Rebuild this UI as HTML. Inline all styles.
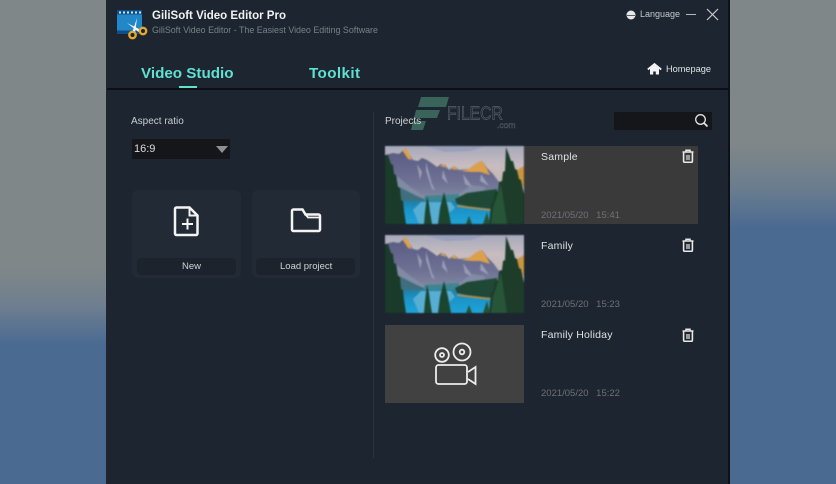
<!DOCTYPE html>
<html><head><meta charset="utf-8"><style>
*{box-sizing:border-box}
html,body{margin:0;padding:0}
body{width:836px;height:484px;position:relative;overflow:hidden;font-family:"Liberation Sans",sans-serif;background:#4a6a92}
.abs,.t{position:absolute}
.t{white-space:nowrap;line-height:1;filter:blur(.25px)}
svg{position:absolute;overflow:visible}
</style></head><body>
<div class="abs" style="left:0;top:0;width:107px;height:484px;background:linear-gradient(#7f8788 0,#7f8788 268px,#6f7f8f 305px,#4a6a92 345px)"></div>
<div class="abs" style="left:729px;top:0;width:107px;height:484px;background:linear-gradient(#7f8788 0,#7f8788 145px,#697c8e 190px,#4a6a92 228px)"></div>
<div class="abs" style="left:106px;top:0;width:624px;height:484px;background:#1c2530;border-left:1px solid #20262e;border-right:2px solid #0d1118"></div>
<div class="abs" style="left:107px;top:88px;width:622px;height:2px;background:#0c1016"></div>
<div class="abs" style="left:179px;top:86px;width:18px;height:2px;background:#62e0d0"></div>
<div class="abs" style="left:373px;top:112px;width:1px;height:346px;background:#29323d"></div>

<!-- logo -->
<svg style="left:117px;top:10px" width="34" height="30" viewBox="0 0 34 30">
<rect x="0" y="0" width="25" height="24" fill="#2287c8"/>
<path d="M0 0h25v4.500H0zM0 20.500h25V24H0z" fill="#0e4f86"/>
<path d="M2 1.500h2v2H2zM6 1.500h2v2H6zM10 1.500h2v2h-2zM14 1.500h2v2h-2zM18 1.500h2v2h-2zM22 1.500h2v2h-2z" fill="#cfe8f8"/>
<path d="M10 13l13 6.500-1.500 2.500zM20 8l-2 16-3-1z" fill="#f6f6f6"/>
<circle cx="15.500" cy="25" r="3.200" fill="#1c2530" stroke="#e5a82e" stroke-width="2.400"/>
<circle cx="26" cy="21" r="3.200" fill="#1c2530" stroke="#e5a82e" stroke-width="2.400"/>
</svg>
<div class="t" style="left:152px;top:11px;font-size:11.500px;font-weight:bold;color:#f0f2f2">GiliSoft Video Editor Pro</div>
<div class="t" style="left:152px;top:26px;font-size:8.900px;color:#7a8086">GiliSoft Video Editor - The Easiest Video Editing Software</div>

<div class="t" style="left:141px;top:66px;font-size:15.200px;font-weight:bold;color:#5fe0d0">Video Studio</div>
<div class="t" style="left:309px;top:66px;font-size:15.200px;font-weight:bold;color:#5fe0d0;letter-spacing:.4px">Toolkit</div>

<!-- top right -->
<svg style="left:626px;top:10px" width="10" height="10" viewBox="0 0 10 10"><circle cx="5" cy="5" r="4.500" fill="#e8e8e8"/><path d="M1 5.500h8" stroke="#5a6068" stroke-width="1"/></svg>
<div class="t" style="left:640px;top:10px;font-size:9px;color:#c4c8cb">Language</div>
<div class="abs" style="left:686px;top:14px;width:10px;height:1px;background:#b5b9bb"></div>
<svg style="left:706px;top:8px" width="13" height="13" viewBox="0 0 13 13"><path d="M1 1l11 11M12 1L1 12" stroke="#c8cbcd" stroke-width="1.200"/></svg>

<svg style="left:647px;top:63px" width="15" height="12" viewBox="0 0 15 12"><path d="M.8 6.500L7.500 1l6.700 5.500" fill="none" stroke="#f2f2f2" stroke-width="1.800"/><path d="M3 5.500L7.500 2 12 5.500V11.500H8.800V8.500H6.200v3H3z" fill="#f2f2f2"/></svg>
<div class="t" style="left:666px;top:65px;font-size:9.200px;color:#dfe2e3">Homepage</div>

<!-- left column -->
<div class="t" style="left:131px;top:116px;font-size:10px;color:#c8cccf;transform:translateY(1px)">Aspect ratio</div>
<div class="abs" style="left:132px;top:139px;width:98px;height:20px;background:#14161a"></div>
<div class="t" style="left:134px;top:144px;font-size:11px;color:#d8dadb">16:9</div>
<svg style="left:215px;top:146px" width="14" height="7" viewBox="0 0 14 7"><path d="M1 0h12L7 7z" fill="#8d9092"/></svg>

<div class="abs" style="left:132px;top:190px;width:109px;height:88px;background:#222a35;border-radius:6px"></div>
<div class="abs" style="left:137px;top:258px;width:99px;height:17px;background:#1c232d;border-radius:4px"></div>
<div class="abs" style="left:252px;top:190px;width:108px;height:88px;background:#222a35;border-radius:6px"></div>
<div class="abs" style="left:256px;top:258px;width:99px;height:17px;background:#1c232d;border-radius:4px"></div>
<svg style="left:174px;top:206px" width="26" height="30" viewBox="0 0 26 30"><path d="M2.500 1.500h13l8 8v18a1.500 1.500 0 0 1-1.500 1.500H2.500a1.500 1.500 0 0 1-1.500-1.500V3a1.500 1.500 0 0 1 1.500-1.500z" fill="none" stroke="#f4f4f4" stroke-width="2.500"/><path d="M15.500 1.500v8h8" fill="none" stroke="#f4f4f4" stroke-width="2"/><path d="M13.500 12.500v11M8 18h11" stroke="#f4f4f4" stroke-width="2"/></svg>
<svg style="left:291px;top:208px" width="30" height="25" viewBox="0 0 30 25"><path d="M2.500 1.500h9l3 5h13a1.500 1.500 0 0 1 1.500 1.500v13.500a1.500 1.500 0 0 1-1.500 1.500h-25A1.500 1.500 0 0 1 1 21.500V3a1.500 1.500 0 0 1 1.500-1.500z" fill="none" stroke="#f4f4f4" stroke-width="2.500"/><path d="M14.500 6.500L17 9.500h11.500" fill="none" stroke="#f4f4f4" stroke-width="1.800"/></svg>
<div class="t" style="left:182px;top:262px;font-size:9.500px;color:#cfd2d4">New</div>
<div class="t" style="left:280px;top:262px;font-size:9.500px;color:#cfd2d4">Load project</div>

<!-- watermark -->
<svg style="left:410px;top:96px" width="110" height="40" viewBox="0 0 110 40">
<path d="M11 1h28l-3 10H8zM6 14h24l-3 8H4zM3 25h13l-3 9H1z" fill="#3a6359"/>
</svg>
<div class="t" style="left:447px;top:107px;font-size:15.700px;color:#1c2530;-webkit-text-stroke:.6px #596069;transform:scaleY(1.150)">FILECR</div>
<div class="t" style="left:497px;top:121px;font-size:8.500px;color:#1c2530;-webkit-text-stroke:.4px #596069">.com</div>

<div class="t" style="left:385px;top:117px;font-size:10px;color:#d0d3d5">Projects</div>
<div class="abs" style="left:614px;top:112px;width:98px;height:18px;background:#14161a"></div>
<svg style="left:693px;top:113px" width="16" height="16" viewBox="0 0 16 16"><circle cx="7.500" cy="6.500" r="4.800" fill="none" stroke="#e2e2e2" stroke-width="1.300"/><path d="M11 10l3.500 3.500" stroke="#e2e2e2" stroke-width="1.800"/></svg>

<!-- projects -->
<div class="abs" style="left:524px;top:146px;width:174px;height:78px;background:#3a3a3b"></div>

<svg width="0" height="0" style="left:0;top:0"><defs>
<linearGradient id="sky" x1="0" y1="0" x2="0" y2="1"><stop offset="0" stop-color="#a5a9bc"/><stop offset=".25" stop-color="#c8bcbf"/><stop offset=".5" stop-color="#bfb4b6"/></linearGradient>
<linearGradient id="mtn" x1="0" y1="0" x2="0" y2="1"><stop offset="0" stop-color="#575a82"/><stop offset=".6" stop-color="#6f7194"/><stop offset="1" stop-color="#8590a4"/></linearGradient>
<linearGradient id="lake" x1="0" y1="0" x2="0" y2="1"><stop offset="0" stop-color="#1f7fa6"/><stop offset=".4" stop-color="#1b93c8"/><stop offset="1" stop-color="#1fa3d8"/></linearGradient>
<symbol id="land" viewBox="0 0 139 78">
<rect width="139" height="78" fill="url(#sky)"/>
<path d="M40 0h60l-14 5-26 1z" fill="#99a0ba"/>
<path d="M0 9L8 7 14 8 20 3 24 8 28 14 33 15 37 12 42 14 48 18 52 21 56 18 60 19 64 24 69 20 74 24 84 23 92 17 97 15 102 22 108 28 114 36 118 42 118 58H0z" fill="url(#mtn)"/>
<path d="M17 4l5-1 5 11-4-1zM55 20l3-2 4 4zM66 23l3-3 4 4zM76 25l8-2 8-6 5-2 5 8 3 6-10-3-9 0z" fill="#dda04a"/>
<path d="M32 18l5 8-2 8zM41 16l6 22 3 6-3-1-6-18zM58 24l5 14-6-6zM78 28l10 14-8-4zM96 28l8 12-9-5z" fill="#9a9cb6"/>
<path d="M12 30l12 10 14 10 20 1 18-4 10-8 14 2-2 14H12z" fill="#8590a6" opacity=".8"/>
<path d="M12 40l20 10 14 6H12z" fill="#3f6f7e"/>
<path d="M40 50l34-2v8H38z" fill="#3f8493"/>
<rect y="55" width="139" height="23" fill="url(#lake)"/>
<path d="M36 56h30l4 6-6 5 2 11H34l-6-14z" fill="#56aed4"/>
<path d="M70 53l12-6 30-4v20l-22-1-18-4z" fill="#1f4836"/>
<path d="M72 59l34 4v2l-34-4z" fill="#a89058"/>
<path d="M129 26l10-6v20h-8z" fill="#c9953f"/>
<path d="M121 1l3 8 2 6 2 0 2 8 2 1 2 9 2 1 3 14v30H104l2-20 2-2 2-10 3-1 1-9 3-1 1-9 2-1z" fill="#1d3d2a"/>
<path d="M108 62l8-24 6 40h-16z" fill="#275538"/>
<path d="M3 9l3 9 2 1 1 9 2 1 2 12 2 1 1 12 2 1 1 10 2 13H0V9z" fill="#1a3a2a"/>
<path d="M42 50l2 8 1 8 2 12h-8l1-12 1-8zM59 46l2 8 2 8 3 16H53l2-16 2-8z" fill="#1b452f"/>
<path d="M84 70l3 8h-6zM102 66l3 12h-7z" fill="#245238"/>
</symbol>
</defs></svg>

<svg style="left:385px;top:146px;filter:blur(.8px)" width="139" height="78"><use href="#land" width="139" height="78"/></svg>
<svg style="left:385px;top:235px;filter:blur(.8px)" width="139" height="78"><use href="#land" width="139" height="78"/></svg>
<div class="abs" style="left:385px;top:325px;width:139px;height:78px;background:#414141"></div>
<svg style="left:433px;top:342px" width="44" height="44" viewBox="0 0 44 44" fill="none" stroke="#ececec" stroke-width="1.800">
<circle cx="9" cy="13" r="6.800"/><circle cx="9" cy="13" r="2"/>
<circle cx="29" cy="10" r="8.500"/><circle cx="29" cy="10" r="2.300"/>
<rect x="3" y="23" width="31" height="19" rx="2.500"/>
<path d="M35 30l7.500-5v17L35 37"/>
</svg>

<div class="t" style="left:541px;top:152px;font-size:10.500px;color:#dfe1e2;letter-spacing:.2px">Sample</div>
<div class="t" style="left:541px;top:241px;font-size:10.500px;color:#dfe1e2;letter-spacing:.2px">Family</div>
<div class="t" style="left:541px;top:330px;font-size:10.500px;color:#dfe1e2;letter-spacing:.2px">Family Holiday</div>
<div class="t" style="left:541px;top:211px;font-size:9.500px;color:#6f7175;word-spacing:5px">2021/05/20 15:41</div>
<div class="t" style="left:541px;top:300px;font-size:9.500px;color:#6f7175;word-spacing:5px">2021/05/20 15:23</div>
<div class="t" style="left:541px;top:389px;font-size:9.500px;color:#6f7175;word-spacing:5px">2021/05/20 15:22</div>

<svg width="0" height="0" style="left:0;top:0"><defs><symbol id="bin" viewBox="0 0 12 14"><path d="M.5 3h11M4 3V1.200h4V3" fill="none" stroke="#e8e8e8" stroke-width="1.500"/><path d="M1.600 3.500v8.800a1 1 0 0 0 1 1h6.800a1 1 0 0 0 1-1V3.500" fill="none" stroke="#e8e8e8" stroke-width="1.600"/><rect x="4" y="6" width="4" height="5" fill="#9a9a9a"/></symbol></defs></svg>
<svg style="left:682px;top:149px" width="12" height="14"><use href="#bin" width="12" height="14"/></svg>
<svg style="left:682px;top:238px" width="12" height="14"><use href="#bin" width="12" height="14"/></svg>
<svg style="left:682px;top:328px" width="12" height="14"><use href="#bin" width="12" height="14"/></svg>
</body></html>
